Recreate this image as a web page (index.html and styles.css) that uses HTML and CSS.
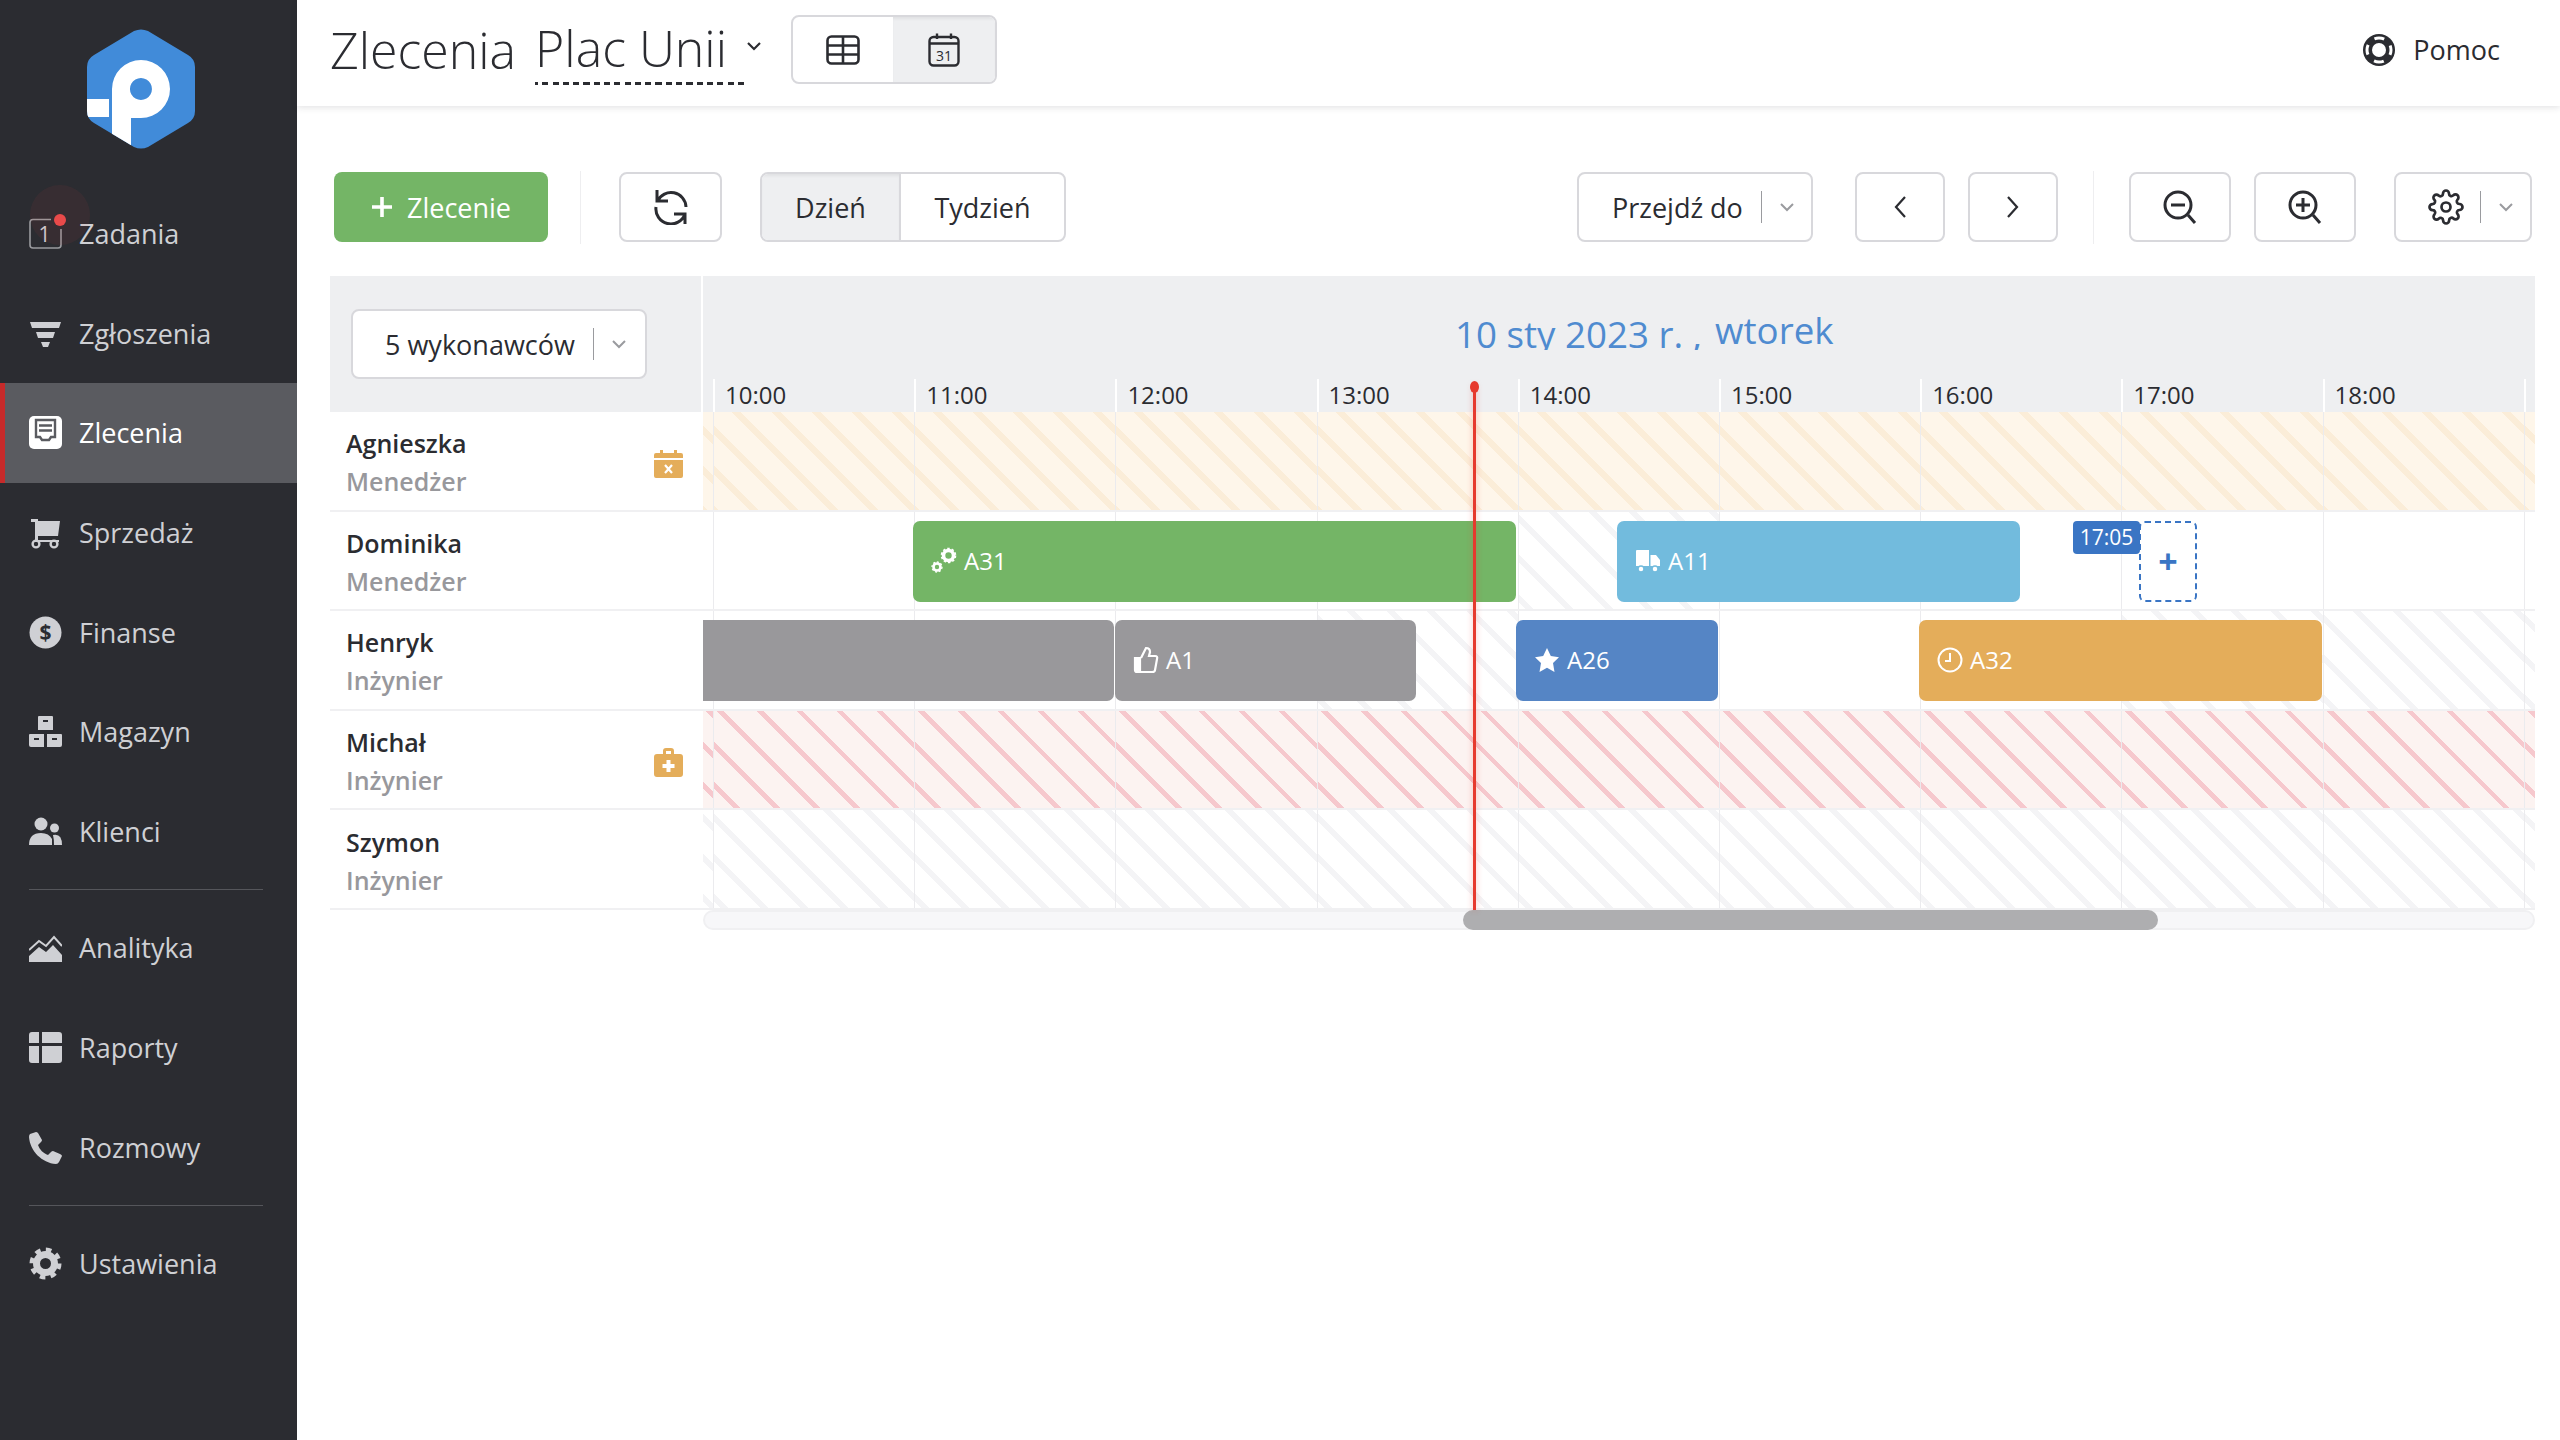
FILE: index.html
```html
<!DOCTYPE html>
<html lang="pl">
<head>
<meta charset="utf-8">
<title>Zlecenia</title>
<link rel="stylesheet" href="styles.css">
</head>
<body>
<div class="app">
  <aside class="sidebar">
    <div class="logo">
      <svg width="108" height="120" viewBox="0 0 108 120">
        <defs><clipPath id="hexclip"><path d="M47 2 Q54 -1 61 2 L101 26 Q108 30 108 38 V82 Q108 90 101 94 L61 118 Q54 121 47 118 L7 94 Q0 90 0 82 V38 Q0 30 7 26 Z"/></clipPath></defs>
        <path d="M47 2 Q54 -1 61 2 L101 26 Q108 30 108 38 V82 Q108 90 101 94 L61 118 Q54 121 47 118 L7 94 Q0 90 0 82 V38 Q0 30 7 26 Z" fill="#418bd9"/>
        <g clip-path="url(#hexclip)" fill="#fff">
          <path d="M25 60 V120 H44 V89 H54 A29 29 0 1 0 25 60 Z M54 49 A11 11 0 1 1 53.900 49 Z" fill-rule="evenodd"/>
          <path d="M0 70 H22 V88 H0 Z"/>
        </g>
      </svg>
    </div>
    <nav class="nav">
      <a class="nav-item">
        <span class="halo"></span>
        <svg class="nav-icon" viewBox="0 0 33 33"><path d="M22 2.500 H4 Q1 2.500 1 5.500 V28 Q1 31 4 31 H29 Q32 31 32 28 V12" fill="none" stroke="#9a9b9f" stroke-width="1.600"/><text x="15.500" y="25" class="digit">1</text></svg>
        <span class="dot"></span>
        <span>Zadania</span>
      </a>
      <a class="nav-item">
        <svg class="nav-icon" viewBox="0 0 33 33"><path d="M1 5 H32 L30 11 H3 Z M7 15 H26 L24 21 H9 Z M12 25 H21 L19 30 H14 Z" fill="#cfd0d4"/></svg>
        <span>Zgłoszenia</span>
      </a>
      <a class="nav-item active">
        <svg class="nav-icon" viewBox="0 0 33 33"><rect width="33" height="33" rx="5" fill="#fff"/><path d="M7 21 V4 H26 V21 H22 L20 24 H13 L11 21 Z" fill="none" stroke="#5a5b60" stroke-width="2.400"/><path d="M10 9.500 H23 M10 14.500 H23" stroke="#5a5b60" stroke-width="2.400"/></svg>
        <span>Zlecenia</span>
      </a>
      <a class="nav-item">
        <svg class="nav-icon" viewBox="0 0 33 33"><path d="M2 3 H9 V5 H31 L29 20 H9 V24 H30 V26 H6 V6 H2 Z" fill="#cfd0d4"/><circle cx="7" cy="28" r="3.400" fill="none" stroke="#cfd0d4" stroke-width="2.400"/><circle cx="25" cy="28" r="3.400" fill="none" stroke="#cfd0d4" stroke-width="2.400"/></svg>
        <span>Sprzedaż</span>
      </a>
      <a class="nav-item">
        <svg class="nav-icon" viewBox="0 0 33 33"><circle cx="16.500" cy="16.500" r="16" fill="#cfd0d4"/><text x="16.500" y="24" class="dollar">$</text></svg>
        <span>Finanse</span>
      </a>
      <a class="nav-item">
        <svg class="nav-icon" viewBox="0 0 33 33"><path d="M10 1 H23 Q24 1 24 2 V15 H9 V2 Q9 1 10 1 Z M1 19 H15 V32 H2 Q0 32 0 30 V20 Q0 19 1 19 Z M18 19 H32 Q33 19 33 20 V30 Q33 32 31 32 H18 Z" fill="#cfd0d4"/><path d="M14 6 H19 M5 24 H10 M23 24 H28" stroke="#2b2c31" stroke-width="2"/></svg>
        <span>Magazyn</span>
      </a>
      <a class="nav-item">
        <svg class="nav-icon" viewBox="0 0 33 33"><circle cx="12" cy="9" r="6.500" fill="#cfd0d4"/><circle cx="25.500" cy="13" r="4.500" fill="#cfd0d4"/><path d="M0 30 Q0 18 12 18 Q20 18 23 24 V30 Z M24 20 Q33 18 33 30 H25 Q25 24 24 20 Z" fill="#cfd0d4"/></svg>
        <span>Klienci</span>
      </a>
      <div class="nav-sep"></div>
      <a class="nav-item">
        <svg class="nav-icon" viewBox="0 0 33 33"><path d="M0 31 V25 L10 16 L17 21 L24 14 L33 24 V31 Z" fill="#cfd0d4"/><path d="M0 19 L10 10 L17 15 L25 6 L33 15" fill="none" stroke="#cfd0d4" stroke-width="2"/></svg>
        <span>Analityka</span>
      </a>
      <a class="nav-item">
        <svg class="nav-icon" viewBox="0 0 33 33"><path d="M3 1 H10 V12 H0 V4 Q0 1 3 1 Z M13 1 H30 Q33 1 33 4 V12 H13 Z M0 15 H10 V32 H3 Q0 32 0 29 Z M13 15 H33 V29 Q33 32 30 32 H13 Z" fill="#cfd0d4"/></svg>
        <span>Raporty</span>
      </a>
      <a class="nav-item">
        <svg class="nav-icon" viewBox="0 0 33 33"><path d="M7 1 L1 3 Q0 4 0 6 C1 20 13 32 27 33 Q29 33 30 31 L33 25 Q33 24 31 23 L24 20 Q23 20 22 21 L19 24 C14 22 11 19 9 14 L12 11 Q13 10 13 9 L9 2 Q8 1 7 1 Z" fill="#cfd0d4"/></svg>
        <span>Rozmowy</span>
      </a>
      <div class="nav-sep"></div>
      <a class="nav-item">
        <svg class="nav-icon" viewBox="0 0 33 33"><circle cx="16.500" cy="16.500" r="13" fill="none" stroke="#cfd0d4" stroke-width="6" stroke-dasharray="5.200 5"/><circle cx="16.500" cy="16.500" r="9" fill="none" stroke="#cfd0d4" stroke-width="7"/></svg>
        <span>Ustawienia</span>
      </a>
    </nav>
  </aside>

  <main class="main">
    <header class="topbar">
      <h1 class="title">Zlecenia</h1>
      <div class="place"><span class="place-name">Plac Unii</span>
        <svg class="place-chev" width="16" height="10" viewBox="0 0 16 10"><path d="M2 2 L8 8 L14 2" fill="none" stroke="#2b2c31" stroke-width="2.200"/></svg>
      </div>
      <div class="btn-group view-switch">
        <span class="seg seg-table">
          <svg width="34" height="30" viewBox="0 0 34 30"><rect x="1.500" y="1.500" width="31" height="27" rx="4" fill="none" stroke="#2b2c31" stroke-width="2.600"/><path d="M1.500 10.500 H32.500 M1.500 19.500 H32.500 M17 1.500 V28.500" stroke="#2b2c31" stroke-width="2.600"/></svg>
        </span>
        <span class="seg seg-cal on">
          <svg width="32" height="34" viewBox="0 0 32 34"><rect x="1.500" y="4" width="29" height="28.500" rx="4" fill="none" stroke="#2b2c31" stroke-width="2.400"/><path d="M1.500 10.500 H30.500 M9 0.500 V6 M23 0.500 V6" stroke="#2b2c31" stroke-width="2.400"/><text x="16" y="28" class="cal31">31</text></svg>
        </span>
      </div>
      <a class="help">
        <svg width="34" height="34" viewBox="0 0 34 34"><circle cx="17" cy="17" r="16" fill="#2b2c31"/><circle cx="17" cy="17" r="7" fill="#fff"/><circle cx="17" cy="17" r="12" fill="none" stroke="#fff" stroke-width="3" stroke-dasharray="10 8.850" stroke-dashoffset="5"/></svg>
        <span>Pomoc</span>
      </a>
    </header>

    <section class="toolbar">
      <button class="btn btn-add"><svg width="22" height="22" viewBox="0 0 22 22"><path d="M11 1 V21 M1 11 H21" stroke="#fff" stroke-width="3.600"/></svg><span>Zlecenie</span></button>
      <span class="tool-sep sep-a"></span>
      <button class="btn btn-refresh"><svg width="36" height="36" viewBox="0 0 36 36" fill="none" stroke="#2b2c31" stroke-width="3"><path d="M33 18 A15 15 0 0 0 4.500 12 M4 1 V12 H15 M3 18 A15 15 0 0 0 32 25 M21 25 H32 V35"/></svg></button>
      <div class="btn-group range">
        <span class="seg seg-day on">Dzień</span>
        <span class="seg seg-week">Tydzień</span>
      </div>
      <button class="btn btn-goto"><span>Przejdź do</span><i class="mini-div"></i><svg class="mini-chev" width="16" height="10" viewBox="0 0 16 10"><path d="M2 2 L8 8 L14 2" fill="none" stroke="#9a9b9f" stroke-width="2"/></svg></button>
      <button class="btn btn-arrow btn-prev"><svg width="14" height="24" viewBox="0 0 14 24"><path d="M12 2 L3 12 L12 22" fill="none" stroke="#2b2c31" stroke-width="2.200"/></svg></button>
      <button class="btn btn-arrow btn-next"><svg width="14" height="24" viewBox="0 0 14 24"><path d="M2 2 L11 12 L2 22" fill="none" stroke="#2b2c31" stroke-width="2.200"/></svg></button>
      <span class="tool-sep sep-b"></span>
      <button class="btn btn-zoom"><svg width="34" height="34" viewBox="0 0 34 34" fill="none" stroke="#2b2c31" stroke-width="3"><circle cx="15" cy="15" r="13"/><path d="M8 15 H22 M25 25 L32 33"/></svg></button>
      <button class="btn btn-zoom btn-zoom-in"><svg width="34" height="34" viewBox="0 0 34 34" fill="none" stroke="#2b2c31" stroke-width="3"><circle cx="15" cy="15" r="13"/><path d="M8 15 H22 M15 8 V22 M25 25 L32 33"/></svg></button>
      <button class="btn btn-gear"><svg width="36" height="36" viewBox="0 0 24 24" fill="none" stroke="#2b2c31" stroke-width="1.800"><circle cx="12" cy="12" r="3"/><path d="M19.400 15a1.650 1.650 0 0 0 .33 1.820l.06.06a2 2 0 0 1 0 2.830 2 2 0 0 1-2.830 0l-.06-.06a1.650 1.650 0 0 0-1.820-.33 1.650 1.650 0 0 0-1 1.510V21a2 2 0 0 1-2 2 2 2 0 0 1-2-2v-.09A1.650 1.650 0 0 0 9 19.400a1.650 1.650 0 0 0-1.820.33l-.06.06a2 2 0 0 1-2.830 0 2 2 0 0 1 0-2.830l.06-.06a1.650 1.650 0 0 0 .33-1.820 1.650 1.650 0 0 0-1.510-1H3a2 2 0 0 1-2-2 2 2 0 0 1 2-2h.09A1.650 1.650 0 0 0 4.600 9a1.650 1.650 0 0 0-.33-1.820l-.06-.06a2 2 0 0 1 0-2.830 2 2 0 0 1 2.830 0l.06.06a1.650 1.650 0 0 0 1.820.33H9a1.650 1.650 0 0 0 1-1.510V3a2 2 0 0 1 2-2 2 2 0 0 1 2 2v.09a1.650 1.650 0 0 0 1 1.510 1.650 1.650 0 0 0 1.820-.33l.06-.06a2 2 0 0 1 2.830 0 2 2 0 0 1 0 2.830l-.06.06a1.650 1.650 0 0 0-.33 1.820V9a1.650 1.650 0 0 0 1.510 1H21a2 2 0 0 1 2 2 2 2 0 0 1-2 2h-.09a1.650 1.650 0 0 0-1.510 1z"/></svg><i class="mini-div"></i><svg class="mini-chev" width="16" height="10" viewBox="0 0 16 10"><path d="M2 2 L8 8 L14 2" fill="none" stroke="#9a9b9f" stroke-width="2"/></svg></button>
    </section>

    <section class="calendar">
      <div class="cal-head">
        <div class="cal-corner">
          <button class="btn btn-workers"><span>5 wykonawców</span><i class="mini-div"></i><svg class="mini-chev" width="16" height="10" viewBox="0 0 16 10"><path d="M2 2 L8 8 L14 2" fill="none" stroke="#9a9b9f" stroke-width="2"/></svg></button>
        </div>
        <div class="cal-times">
          <div class="date"><span class="date-a">10 sty 2023 r. ,</span><span class="date-b">wtorek</span></div>
          <div class="times">
            <span class="t-lead"></span>
            <span class="t">10:00</span><span class="t">11:00</span><span class="t">12:00</span><span class="t">13:00</span><span class="t">14:00</span><span class="t">15:00</span><span class="t">16:00</span><span class="t">17:00</span><span class="t">18:00</span>
            <span class="t t-tail"></span>
          </div>
        </div>
      </div>

      <div class="cal-row">
        <div class="person"><div class="p-text"><div class="p-name">Agnieszka</div><div class="p-role">Menedżer</div></div>
          <svg class="p-flag" width="29" height="29" viewBox="0 0 29 29"><path d="M2 4 H6 V1 H9 V4 H20 V1 H23 V4 H27 Q29 4 29 6 V9 H0 V6 Q0 4 2 4 Z M0 11 H29 V27 Q29 29 27 29 H2 Q0 29 0 27 Z" fill="#e4ad5a"/><path d="M11 16 L18 24 M18 16 L11 24" stroke="#fff" stroke-width="2.200"/></svg>
        </div>
        <div class="track">
          <i class="c orange"></i><i class="c orange"></i><i class="c orange"></i><i class="c orange"></i><i class="c orange"></i><i class="c orange"></i><i class="c orange"></i><i class="c orange"></i><i class="c orange"></i><i class="c orange"></i><i class="c orange"></i>
        </div>
      </div>

      <div class="cal-row">
        <div class="person"><div class="p-text"><div class="p-name">Dominika</div><div class="p-role">Menedżer</div></div></div>
        <div class="track">
          <i class="c"></i><i class="c"></i><i class="c"></i><i class="c"></i><i class="c"></i><i class="c gray"></i><i class="c"></i><i class="c"></i><i class="c"></i><i class="c"></i><i class="c"></i>
          <div class="ev ev-green" style="left:210px;width:603px">
            <svg width="26" height="26" viewBox="0 0 26 26" fill="none" stroke="#fff"><circle cx="17.500" cy="8.500" r="5" stroke-width="3.600"/><circle cx="17.500" cy="8.500" r="7" stroke-width="1.600" stroke-dasharray="2.500 2"/><circle cx="6" cy="20" r="3.500" stroke-width="2.600"/><circle cx="6" cy="20" r="5" stroke-width="1.300" stroke-dasharray="2 1.800"/></svg>
            <span>A31</span>
          </div>
          <div class="ev ev-sky" style="left:914px;width:403px">
            <svg width="26" height="26" viewBox="0 0 26 26" fill="#fff"><path d="M1 4 Q1 3 2 3 H14 V19 H1 Z M15.500 8 H21 L25 13 V19 H15.500 Z"/><circle cx="6" cy="22" r="3" fill="#fff" stroke="#72bbdd" stroke-width="1.500"/><circle cx="20" cy="22" r="3" fill="#fff" stroke="#72bbdd" stroke-width="1.500"/></svg>
            <span>A11</span>
          </div>
          <span class="time-tip">17:05</span>
          <div class="slot">+</div>
        </div>
      </div>

      <div class="cal-row">
        <div class="person"><div class="p-text"><div class="p-name">Henryk</div><div class="p-role">Inżynier</div></div></div>
        <div class="track">
          <i class="c"></i><i class="c"></i><i class="c"></i><i class="c"></i><i class="c gray"></i><i class="c"></i><i class="c"></i><i class="c"></i><i class="c gray"></i><i class="c gray"></i><i class="c gray"></i>
          <div class="ev ev-gray ev-flat" style="left:0;width:411px"></div>
          <div class="ev ev-gray" style="left:412px;width:301px">
            <svg width="26" height="28" viewBox="0 0 26 28" fill="none" stroke="#fff" stroke-width="2.200"><path d="M2 12 H7 V26 H4 Q2 26 2 24 Z" fill="#fff"/><path d="M8 12 L13 2 Q17 2 17 6 L16 10 H22 Q25 10 24 13 L22 24 Q22 26 19 26 H7"/></svg>
            <span>A1</span>
          </div>
          <div class="ev ev-blue" style="left:813px;width:202px">
            <svg width="26" height="26" viewBox="0 0 26 26" fill="#fff"><path d="M13 1 L16.800 9 L25 10.200 L19 16 L20.500 25 L13 20.800 L5.500 25 L7 16 L1 10.200 L9.200 9 Z"/></svg>
            <span>A26</span>
          </div>
          <div class="ev ev-amber" style="left:1216px;width:403px">
            <svg width="26" height="26" viewBox="0 0 26 26" fill="none" stroke="#fff" stroke-width="2"><circle cx="13" cy="13" r="11.500"/><path d="M13 6 V14 H8"/></svg>
            <span>A32</span>
          </div>
        </div>
      </div>

      <div class="cal-row">
        <div class="person"><div class="p-text"><div class="p-name">Michał</div><div class="p-role">Inżynier</div></div>
          <svg class="p-flag" width="29" height="29" viewBox="0 0 29 29"><path d="M9 6 V3 Q9 0 12 0 H17 Q20 0 20 3 V6 H26 Q29 6 29 9 V26 Q29 29 26 29 H3 Q0 29 0 26 V9 Q0 6 3 6 Z M12 3 V6 H17 V3 Z" fill="#e4ad5a" fill-rule="evenodd"/><path d="M14.500 12 V24 M8.500 18 H20.500" stroke="#fff" stroke-width="4"/></svg>
        </div>
        <div class="track">
          <i class="c pink"></i><i class="c pink"></i><i class="c pink"></i><i class="c pink"></i><i class="c pink"></i><i class="c pink"></i><i class="c pink"></i><i class="c pink"></i><i class="c pink"></i><i class="c pink"></i><i class="c pink"></i>
        </div>
      </div>

      <div class="cal-row">
        <div class="person"><div class="p-text"><div class="p-name">Szymon</div><div class="p-role">Inżynier</div></div></div>
        <div class="track">
          <i class="c gray"></i><i class="c gray"></i><i class="c gray"></i><i class="c gray"></i><i class="c gray"></i><i class="c gray"></i><i class="c gray"></i><i class="c gray"></i><i class="c gray"></i><i class="c gray"></i><i class="c gray"></i>
        </div>
      </div>

      <div class="scrollbar"><div class="thumb"></div></div>
      <div class="now"></div>
    </section>
  </main>
</div>
</body>
</html>
```
FILE: styles.css
```css
* { box-sizing: border-box; }
html, body { margin: 0; height: 100%; }
body { font-family: "Open Sans", "Liberation Sans", sans-serif; color: #2b2c31; background: #fff; overflow: hidden; }
.app { display: flex; height: 1440px; }

/* sidebar */
.sidebar { width: 297px; flex: none; background: #2b2c31; }
.logo { height: 184px; padding: 29px 0 0 87px; }
.logo svg { display: block; }
.nav-item { position: relative; display: flex; align-items: center; gap: 17px; height: 99.6px; padding-left: 29px; font-size: 27px; color: #cfd0d4; }
.nav-item.active { background: #5a5b60; color: #fff; box-shadow: inset 5px 0 0 #c62a2a; }
.nav-icon { width: 33px; height: 33px; flex: none; }
.nav-sep { height: 1px; margin: 8px 34px 8px 29px; background: #55565b; }
.digit { font-family: "Open Sans", sans-serif; font-size: 21px; fill: #cfd0d4; text-anchor: middle; }
.dollar { font-family: "Open Sans", sans-serif; font-size: 21px; font-weight: 700; fill: #2b2c31; text-anchor: middle; }
.cal31 { font-family: "Open Sans", sans-serif; font-size: 14px; fill: #2b2c31; text-anchor: middle; }
.halo { position: absolute; left: 30px; top: 1px; width: 60px; height: 60px; border-radius: 50%; background: rgba(230, 70, 70, .07); }
.dot { position: absolute; left: 54px; top: 30px; width: 12px; height: 12px; border-radius: 50%; background: #e94a4a; }

/* top bar */
.main { flex: 1; min-width: 0; }
.topbar { display: flex; align-items: center; height: 106px; padding: 0 28px 7px 33px; background: #fff; box-shadow: 0 2px 6px rgba(40, 40, 50, .12); }
.title { margin: 0; font-size: 50px; font-weight: 300; line-height: 68px; }
.place { display: flex; align-items: center; margin-left: 19px; }
.place-name { padding-right: 20px; font-size: 50px; font-weight: 300; line-height: 68px; border-bottom: 3px dashed #2b2c31; border-image: repeating-linear-gradient(90deg, #2b2c31 0 6px, transparent 6px 10px) 3; }
.place-chev { margin: 0 0 8px -1px; }
.view-switch { margin-left: 29px; width: 206px; height: 69px; }
.seg-table { width: 100px; }
.seg-cal { flex: 1; }
.help { display: flex; align-items: center; gap: 17px; margin-left: auto; margin-right: 32px; font-size: 27px; }

/* toolbar */
.toolbar { display: flex; align-items: center; height: 70px; margin-top: 66px; padding-left: 37px; }
.btn { display: flex; align-items: center; justify-content: center; height: 70px; padding: 0; border: 2px solid #d8d8dc; border-radius: 8px; background: #fff; color: #2b2c31; font: 400 27px "Open Sans", sans-serif; }
.btn-group { display: flex; border: 2px solid #d8d8dc; border-radius: 8px; overflow: hidden; background: #fff; }
.seg { display: flex; align-items: center; justify-content: center; font-size: 27px; }
.seg.on { background: #eeeff1; box-shadow: inset 0 3px 3px -1px rgba(0, 0, 0, .06); }
.btn-add { width: 214px; gap: 14px; border: 0; border-radius: 8px; background: #74b566; color: #fff; font-size: 27px; font-weight: 500; }
.tool-sep { width: 1px; height: 73px; background: #eeeef0; }
.sep-a { margin: 0 38px 0 32px; }
.sep-b { margin: 0 35px 0 35px; }
.btn-refresh { width: 103px; }
.range { width: 306px; height: 70px; margin-left: 38px; }
.seg-day { width: 139px; border-right: 2px solid #d8d8dc; }
.seg-week { flex: 1; }
.btn-goto { width: 236px; margin-left: 511px; justify-content: flex-start; padding-left: 33px; }
.mini-div { width: 1px; height: 32px; margin-left: 18px; background: #9a9b9f; }
.mini-chev { margin-left: 17px; }
.btn-arrow { width: 90px; margin-left: 42px; }
.btn-next { margin-left: 23px; }
.btn-zoom { width: 102px; }
.btn-zoom-in { margin-left: 23px; }
.btn-gear { width: 138px; margin-left: 38px; justify-content: flex-start; padding-left: 32px; }
.btn-gear .mini-div { margin-left: 16px; }
.btn-gear .mini-chev { margin-left: 17px; }

/* calendar */
.calendar { position: relative; width: 2205px; margin: 34px 0 0 33px; }
.cal-head { display: flex; height: 136px; background: #eeeff1; }
.cal-corner { width: 373px; flex: none; padding: 33px 0 0 21px; border-right: 2px solid #fff; }
.btn-workers { width: 296px; justify-content: flex-start; padding-left: 32px; }
.cal-times { flex: 1; min-width: 0; }
.date { display: flex; align-items: flex-start; height: 103px; padding: 33px 0 0 752px; font-size: 36.7px; color: #4f8bd0; line-height: 50px; }
.date-a { display: block; height: 41px; overflow: hidden; white-space: nowrap; }
.date-b { margin: -4px 0 0 13px; }
.times { display: grid; grid-template-columns: 10px repeat(9, 201.2px) 1fr; height: 33px; }
.t { padding-left: 10px; font-size: 24px; line-height: 32px; border-left: 2px solid #fff; }

.cal-row { display: flex; height: 99.6px; }
.person { display: flex; justify-content: space-between; align-items: center; width: 373px; flex: none; padding: 0 20px 0 16px; border-bottom: 2px solid #f0f0f2; }
.p-text { margin-top: 3px; }
.p-name { font-size: 25px; font-weight: 600; line-height: 38px; }
.p-role { font-size: 25px; font-weight: 600; line-height: 38px; color: #98989c; }
.p-flag { margin-top: 6px; }
.track { position: relative; flex: 1; min-width: 0; display: grid; grid-template-columns: 10px repeat(9, 201.2px) 1fr; border-bottom: 2px solid #f0f0f2; }
.c { display: block; border-left: 1px solid #ebebee; }
.c:first-child { border-left: 0; }
.gray { background: repeating-linear-gradient(45deg, #fff 0 4.5px, #f4f4f6 4.5px 10.5px, #fff 10.5px 28.28px); }
.orange { background: repeating-linear-gradient(45deg, #fbedd8 0 3px, #fef6ea 3px 25.28px, #fbedd8 25.28px 28.28px); }
.pink { background: repeating-linear-gradient(45deg, #fcf3f1 0 13.6px, #f6c8cd 13.6px 18.4px, #fcf3f1 18.4px 28.28px); }

.ev { position: absolute; top: 9px; height: 81px; display: flex; align-items: center; gap: 7px; padding: 0 0 2px 18px; border-radius: 7px; color: #fff; font-size: 24px; font-weight: 500; }
.ev-green { background: #74b566; }
.ev-sky { background: #72bbdd; }
.ev-gray { background: #99989b; }
.ev-flat { border-radius: 0 7px 7px 0; }
.ev-blue { background: #5585c5; }
.ev-amber { background: #e4ad5a; }
.time-tip { position: absolute; left: 1370px; top: 9px; display: flex; align-items: center; justify-content: center; width: 67px; height: 33px; border-radius: 4px; background: #3a75c4; color: #fff; font-size: 21px; }
.slot { position: absolute; left: 1436px; top: 9px; display: flex; align-items: center; justify-content: center; width: 58px; height: 81px; border: 2px dashed #3a75c4; border-radius: 6px; color: #3a75c4; font-size: 34px; font-weight: 700; line-height: 1; }
.scrollbar { width: 1832px; height: 20px; margin-left: 373px; border: 2px solid #f0f0f2; border-radius: 10px; background: #f7f7f9; }
.thumb { width: 695px; height: 20px; margin: -2px 0 0 758px; border-radius: 10px; background: #aeaeb0; }
.now { position: absolute; left: 1143px; top: 109px; width: 3px; height: 525px; background: #e63a2e; box-shadow: 0 0 6px rgba(230, 58, 46, .35); }
.now::before { content: ""; position: absolute; left: -3px; top: -4px; width: 9px; height: 12px; border-radius: 50%; background: #e63a2e; }
```
